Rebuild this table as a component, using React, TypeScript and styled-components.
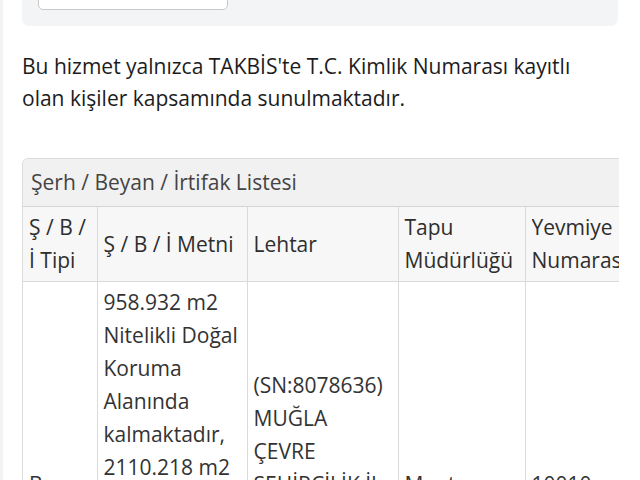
import React from "react";
import styled, { createGlobalStyle } from "styled-components";

const Global = createGlobalStyle`
  html, body { margin: 0; padding: 0; background: #ffffff; }
  body { font-family: "Open Sans", "Noto Sans", sans-serif; color: #222; overflow: hidden; }
`;

const Page = styled.div`
  border-left: 3px solid #f3f3f3;
  padding: 0 22px 0 19px;
  width: 640px;
  box-sizing: border-box;
`;

const FilterCard = styled.div`
  margin-top: -40px;
  background: #f3f4f6;
  border-radius: 0 0 7px 7px;
  padding: 10px 16px 16px;
`;

const Input = styled.div`
  width: 190px;
  height: 40px;
  box-sizing: border-box;
  background: #fff;
  border: 1px solid #c9c9c9;
  border-radius: 5px;
`;

const Notice = styled.p`
  margin: 24px 0 0;
  font-size: 21px;
  line-height: 32px;
  color: #1c1c1c;
  letter-spacing: 0;
`;

const Panel = styled.section`
  margin-top: 44px;
  width: 596px;
  overflow: hidden;
  border: 1px solid #dcdcdc;
  border-right: none;
  border-bottom: none;
  border-radius: 6px 0 0 0;
`;

const PanelHeading = styled.div`
  background: #f1f1f1;
  padding: 7px 8px;
  font-size: 21px;
  line-height: 33px;
  color: #444;
  border-bottom: 1px solid #d4d4d4;
  box-shadow: 0 1px 2px rgba(0, 0, 0, 0.08);
  white-space: nowrap;
`;

const Table = styled.table`
  border-collapse: collapse;
  table-layout: fixed;
  width: 740px;
  font-size: 21px;
  line-height: 33px;
`;

const Th = styled.th`
  background: #f7f7f7;
  border: 1px solid #dadada;
  border-top: none;
  padding: 4px 6px;
  font-weight: 500;
  color: #2e2e2e;
  text-align: left;
  vertical-align: middle;
  &:first-child { border-left: none; }
`;

const Td = styled.td`
  background: #fff;
  border: 1px solid #dadada;
  padding: 4px 6px;
  color: #333;
  text-align: left;
  vertical-align: middle;
  &:first-child { border-left: none; }
`;

const Clip = styled.span`
  display: block;
  white-space: nowrap;
  overflow: hidden;
`;

export default function App() {
  return (
    <>
      <Global />
      <Page>
        <FilterCard>
          <Input />
        </FilterCard>
        <Notice>
          Bu hizmet yalnızca TAKBİS'te T.C. Kimlik Numarası kayıtlı olan kişiler kapsamında sunulmaktadır.
        </Notice>
        <Panel>
          <PanelHeading>Şerh / Beyan / İrtifak Listesi</PanelHeading>
          <Table>
            <colgroup>
              <col style={{ width: 74 }} />
              <col style={{ width: 150 }} />
              <col style={{ width: 151 }} />
              <col style={{ width: 127 }} />
              <col style={{ width: 120 }} />
              <col style={{ width: 118 }} />
            </colgroup>
            <thead>
              <tr>
                <Th>Ş / B / İ Tipi</Th>
                <Th>Ş / B / İ Metni</Th>
                <Th>Lehtar</Th>
                <Th>Tapu Müdürlüğü</Th>
                <Th><Clip>Yevmiye</Clip><Clip>Numarası</Clip></Th>
                <Th>Tarih</Th>
              </tr>
            </thead>
            <tbody>
              <tr>
                <Td>Beyan</Td>
                <Td>
                  958.932 m2 Nitelikli Doğal Koruma Alanında kalmaktadır, 2110.218 m2 Sürdürülebilir Koruma ve Kontrollü Kullanım Alanında kalmaktadır.
                </Td>
                <Td>(SN:8078636) MUĞLA ÇEVRE ŞEHİRCİLİK İL MÜDÜRLÜĞÜ (MUĞLA) LEHİNE</Td>
                <Td>Menteşe</Td>
                <Td>10010</Td>
                <Td>12.05.2021</Td>
              </tr>
            </tbody>
          </Table>
        </Panel>
      </Page>
    </>
  );
}
